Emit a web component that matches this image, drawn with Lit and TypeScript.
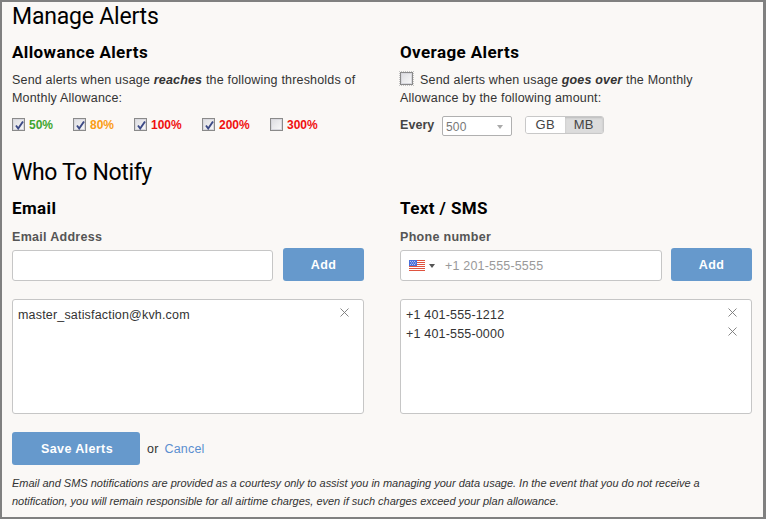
import { LitElement, html, css, svg } from "lit";
import { customElement } from "lit/decorators.js";

const xIcon = html`<svg class="x" width="9" height="9" viewBox="0 0 9 9"><path d="M.5.5l8 8M8.5.5l-8 8" stroke="#777" stroke-width=".9" fill="none"/></svg>`;

const check = svg`<path d="M3 6.5l2.2 3L10 2.5" stroke="#3c4a86" stroke-width="1.9" fill="none"/>`;

function box(on: boolean, dotted = false) {
  return html`<span class="cb ${dotted ? "dotted" : ""}">${on ? html`<svg width="11" height="11" viewBox="0 0 11 11">${check}</svg>` : ""}</span>`;
}

const flag = html`<svg width="16" height="11" viewBox="0 0 16 11" class="flag">
  <rect width="16" height="11" fill="#fff"/>
  <path d="M0 .5h16M0 2.5h16M0 4.5h16M0 6.5h16M0 8.5h16M0 10.5h16" stroke="#e0533f" stroke-width="1"/>
  <rect width="8" height="6" fill="#4a6fd8"/>
  <path d="M1 1.5h6M2 3h5M1 4.5h6" stroke="#dfe6ff" stroke-width=".7" stroke-dasharray="1 1"/>
</svg>`;

@customElement("app-root")
export class AppRoot extends LitElement {
  static styles = css`
    :host { display: block; width: 766px; height: 519px; box-sizing: border-box; border: 2px solid #808080; border-right-width: 3px; background: #faf8f6; padding: 0 9px 0 10px; font-family: "Liberation Sans", Arial, sans-serif; font-size: 12.5px; color: #333; overflow: hidden; letter-spacing: .18px; }
    h1, h2, p { margin: 0; font-weight: normal; }
    h1 { font-family: "Roboto", sans-serif; font-size: 23px; line-height: 28px; color: #000; font-weight: 400; letter-spacing: -.2px; }
    h2 { font-family: "Roboto", sans-serif; font-size: 17px; line-height: 20px; color: #000; font-weight: 700; letter-spacing: .4px; }
    .title1 { margin: 1px 0 11px; }
    .title2 { margin: 23px 0 11px; letter-spacing: -.35px; }
    .cols { display: grid; grid-template-columns: 352px 352px; column-gap: 36px; }
    .desc { line-height: 17.5px; margin-top: 10px; max-width: 346px; }
    .wrapnarrow { max-width: 310px; }
    b.em { font-style: italic; font-weight: bold; }
    .checks { display: flex; margin-top: 9px; height: 17px; align-items: center; }
    .chk { display: flex; align-items: center; gap: 4px; font-weight: bold; font-size: 12px; letter-spacing: 0; }
    .chk.a { width: 61px; } .chk.b { width: 61px; } .chk.c { width: 68px; } .chk.d { width: 68px; }
    .green { color: #3fa62f; } .orange { color: #fb9d15; } .red { color: #f01010; }
    .cb { width: 11px; height: 11px; border: 1px solid #8a8a8a; box-shadow: inset 0 0 0 1px #d8d8de; background: linear-gradient(135deg, #dcdce0, #fafafa); display: inline-flex; flex: none; }
    .cb.dotted { outline: 1px dotted #c4c4c4; }
    .inl { display: inline-flex; vertical-align: -1px; margin-right: 7px; }
    .every { display: flex; align-items: center; margin-top: 8px; height: 21px; }
    .every label { font-weight: bold; font-size: 12.5px; color: #444; margin-right: 7px; letter-spacing: .05px; position: relative; top: -1px; width: 35px; }
    .sel { width: 70px; height: 20px; box-sizing: border-box; border: 1px solid #b0b0b0; border-radius: 2px; background: #fff; color: #777; font-size: 12px; display: flex; align-items: center; justify-content: space-between; padding: 2px 8px 0 3px; margin-right: 13px; }
    .tri { width: 0; height: 0; border: 3.5px solid transparent; border-top: 4px solid #aaa; border-bottom: 0; }
    .seg { display: flex; width: 79px; height: 18px; box-sizing: border-box; border: 1px solid #c8c8c8; border-radius: 3px; overflow: hidden; font-size: 13px; color: #444; position: relative; top: -1px; letter-spacing: .3px; }
    .seg span { flex: 1; display: flex; align-items: center; justify-content: center; background: #fff; }
    .seg span.on { background: #dcdcdc; box-shadow: inset 0 1px 2px #bbb; }
    .lbl { font-weight: bold; color: #555; font-size: 12.5px; line-height: 16px; margin-top: 11px; letter-spacing: .3px; }
    .row { display: flex; gap: 10px; align-items: flex-end; margin-top: 3px; }
    .phone .row { gap: 9px; }
    .input { flex: 1; height: 31px; box-sizing: border-box; border: 1px solid #c6c6c6; border-radius: 3px; background: #fff; display: flex; align-items: center; color: #999; }
    .btn { background: #6699cc; color: #fff; font-weight: bold; border-radius: 3px; display: flex; align-items: center; justify-content: center; font-size: 12.5px; letter-spacing: .4px; }
    .add { width: 81px; height: 33px; flex: none; }
    .phone .input { padding-left: 8px; }
    .flag { margin-right: 4px; }
    .dd { width: 0; height: 0; border: 3px solid transparent; border-top: 4px solid #555; border-bottom: 0; margin-right: 10px; }
    .list { margin-top: 18px; height: 115px; box-sizing: border-box; border: 1px solid #c6c6c6; border-radius: 3px; background: #fff; padding: 6px 5px 4px; color: #333; }
    .item { display: flex; justify-content: space-between; line-height: 19px; }
    .x { margin: 2px 9px 0 0; }
    .actions { display: flex; align-items: center; margin-top: 18px; }
    .save { width: 128px; height: 33px; padding-left: 2px; box-sizing: border-box; }
    .or { margin-left: 7px; color: #333; }
    .cancel { margin-left: 6px; color: #5b8fd0; }
    .note { margin-top: 9px; font-size: 11px; font-style: italic; line-height: 18px; color: #333; letter-spacing: -.01px; max-width: 700px; }
  `;

  render() {
    return html`
      <h1 class="title1">Manage Alerts</h1>
      <div class="cols">
        <div>
          <h2>Allowance Alerts</h2>
          <p class="desc">Send alerts when usage <b class="em">reaches</b> the following thresholds of Monthly Allowance:</p>
          <div class="checks">
            <span class="chk a green">${box(true)}50%</span>
            <span class="chk b orange">${box(true)}80%</span>
            <span class="chk c red">${box(true)}100%</span>
            <span class="chk d red">${box(true)}200%</span>
            <span class="chk red">${box(false)}300%</span>
          </div>
        </div>
        <div>
          <h2>Overage Alerts</h2>
          <p class="desc wrapnarrow"><span class="inl">${box(false, true)}</span>Send alerts when usage <b class="em">goes over</b> the Monthly Allowance by the following amount:</p>
          <div class="every">
            <label>Every</label>
            <div class="sel">500<span class="tri"></span></div>
            <div class="seg"><span>GB</span><span class="on">MB</span></div>
          </div>
        </div>
      </div>
      <h1 class="title2">Who To Notify</h1>
      <div class="cols">
        <div>
          <h2>Email</h2>
          <div class="lbl">Email Address</div>
          <div class="row"><div class="input"></div><div class="btn add">Add</div></div>
          <div class="list"><div class="item">master_satisfaction@kvh.com ${xIcon}</div></div>
        </div>
        <div class="phone">
          <h2>Text / SMS</h2>
          <div class="lbl">Phone number</div>
          <div class="row"><div class="input">${flag}<span class="dd"></span>+1 201-555-5555</div><div class="btn add">Add</div></div>
          <div class="list">
            <div class="item">+1 401-555-1212 ${xIcon}</div>
            <div class="item">+1 401-555-0000 ${xIcon}</div>
          </div>
        </div>
      </div>
      <div class="actions"><div class="btn save">Save Alerts</div><span class="or">or</span><span class="cancel">Cancel</span></div>
      <p class="note">Email and SMS notifications are provided as a courtesy only to assist you in managing your data usage. In the event that you do not receive a notification, you will remain responsible for all airtime charges, even if such charges exceed your plan allowance.</p>
    `;
  }
}
